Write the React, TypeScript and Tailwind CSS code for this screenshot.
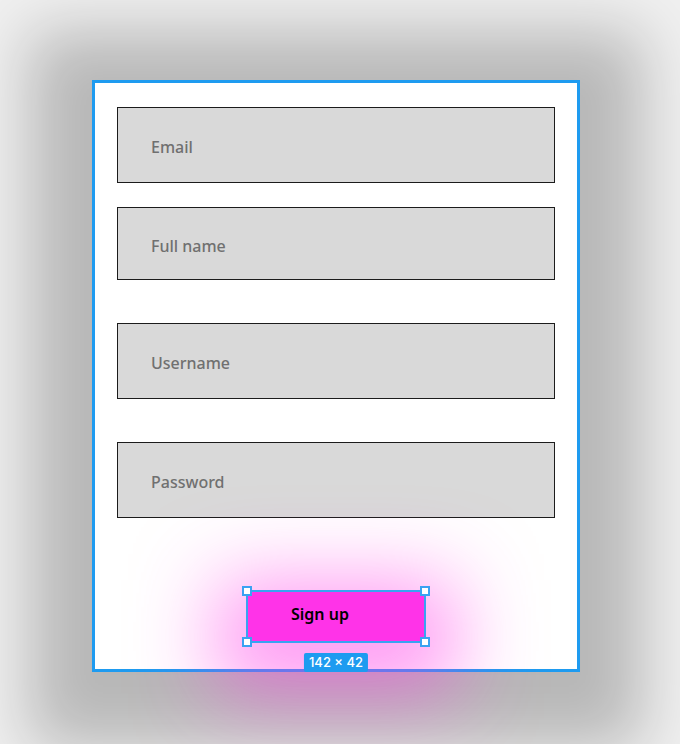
const fields = [
  { label: 'Email', type: 'email', h: 'h-[76px]', mt: 'mt-0' },
  { label: 'Full name', type: 'text', h: 'h-[73px]', mt: 'mt-[24px]' },
  { label: 'Username', type: 'text', h: 'h-[76px]', mt: 'mt-[43px]' },
  { label: 'Password', type: 'password', h: 'h-[76px]', mt: 'mt-[43px]' },
]

const font = "font-['Noto_Sans','Open_Sans',sans-serif]"

export default function App() {
  return (
    <div className={`h-[744px] overflow-hidden bg-[#f0f0f0] pt-[80px] pl-[92px] ${font}`}>
      {/* ── Card ── */}
      <div className="w-[488px] h-[592px] bg-white border-[3px] border-[#1e9bf0] shadow-[0_14px_60px_62px_rgba(0,0,0,0.235)] px-[22px] pt-[24px] flex flex-col">
        {fields.map((f) => (
          <input
            key={f.label}
            type={f.type}
            placeholder={f.label}
            className={`${f.h} ${f.mt} w-full bg-[#d9d9d9] border border-[#1c1c1c] pl-[33px] pt-[4px] text-[16px] font-medium text-[#333] placeholder:text-[#707070] outline-none ${font}`}
          />
        ))}

        {/* Selected button */}
        <div className="mt-[72px] self-center relative">
          <button
            className={`w-[180px] h-[53px] bg-[#ff33e8] border-2 border-[#3aa2f2] text-left pl-[43px] pb-[5px] text-[16px] font-semibold text-black shadow-[0_20px_80px_30px_rgba(255,51,232,0.5)] ${font}`}
          >
            Sign up
          </button>
          <span className="absolute -top-[4px] -left-[4px] w-[10px] h-[10px] bg-white border-2 border-[#3aa2f2]" />
          <span className="absolute -top-[4px] -right-[4px] w-[10px] h-[10px] bg-white border-2 border-[#3aa2f2]" />
          <span className="absolute -bottom-[4px] -left-[4px] w-[10px] h-[10px] bg-white border-2 border-[#3aa2f2]" />
          <span className="absolute -bottom-[4px] -right-[4px] w-[10px] h-[10px] bg-white border-2 border-[#3aa2f2]" />
          <span className="absolute top-[63px] left-1/2 -translate-x-1/2 bg-[#1e9bf0] text-white text-[13px] font-medium leading-[19px] px-[5px] rounded-[2px] whitespace-nowrap font-['Inter',sans-serif]">
            142 × 42
          </span>
        </div>
      </div>
    </div>
  )
}
